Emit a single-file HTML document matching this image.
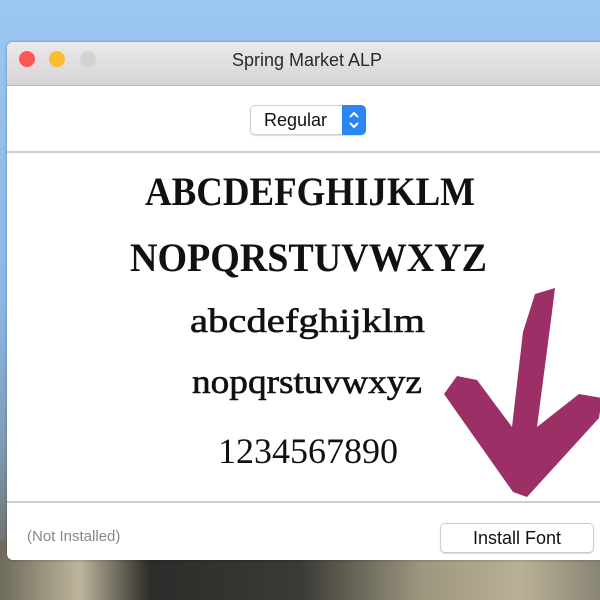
<!DOCTYPE html>
<html><head><style>
body{margin:0;width:600px;height:600px;overflow:hidden;position:relative;font-family:"Liberation Sans",sans-serif;
background:linear-gradient(#9cc6f2,#8bb8e8 300px,#7f9bb5 450px,#6d6c60 560px,#4a4a44 600px);}
.rock{position:absolute;left:0;top:540px;width:600px;height:60px;background:linear-gradient(90deg,#6e6a5c 0,#bdb59c 80px,#2c2c2a 150px,#3a3a36 300px,#9d967e 420px,#b9b196 520px,#8a8574 600px);}
.win{position:absolute;left:7px;top:42px;width:600px;height:518px;background:#fff;border-radius:6px 0 0 6px;overflow:hidden;box-shadow:0 0 3px rgba(0,0,0,.3);}
.tb{height:43px;background:linear-gradient(#ebe9eb,#d6d4d6);border-bottom:1px solid #b8b8b8;text-align:center;line-height:36px;font-size:18px;color:#2a2a2a;position:relative}
.d{position:absolute;top:9px;width:16px;height:16px;border-radius:50%}
.sel{position:absolute;left:243px;top:63px;width:116px;height:30px;border:1px solid #d0d0d0;border-radius:5px;box-sizing:border-box;font-size:18px;line-height:28px;padding-left:13px;color:#111;box-shadow:0 1px 1px rgba(0,0,0,.15)}
.sel b{position:absolute;right:-1px;top:-1px;width:24px;height:30px;background:#2a86f4;border-radius:0 5px 5px 0}
.l1{position:absolute;left:0;top:109px;width:600px;height:2px;background:#cfcfcf}
.l2{position:absolute;left:0;top:459px;width:600px;height:2px;background:#cfcfcf}
.ni{position:absolute;left:20px;top:486px;font-size:15px;color:#888}
.btn{position:absolute;left:433px;top:481px;width:154px;height:30px;border:1px solid #ccc;border-radius:5px;box-sizing:border-box;text-align:center;line-height:28px;font-size:18px;color:#111;box-shadow:0 1px 1px rgba(0,0,0,.15)}
</style></head><body>
<div class="rock"></div>
<div class="win">
<div class="tb"><span class="d" style="left:12px;background:#fc5753"></span><span class="d" style="left:42px;background:#fdbc2e"></span><span class="d" style="left:73px;background:#d3d3d3"></span>Spring Market ALP</div>
<div class="sel">Regular<b><svg width="24" height="30" viewBox="0 0 24 30"><path d="M8 12l4-4 4 4M8 18l4 4 4-4" stroke="#fff" stroke-width="2" fill="none"/></svg></b></div>
<div class="l1"></div>
<svg style="position:absolute;left:0;top:0" width="600" height="518">
<g font-family="Liberation Serif,serif" fill="#111">
<text x="138" y="163" font-size="40" font-weight="bold" textLength="330" lengthAdjust="spacingAndGlyphs">ABCDEFGHIJKLM</text>
<text x="123" y="229" font-size="40" font-weight="bold" textLength="357" lengthAdjust="spacingAndGlyphs">NOPQRSTUVWXYZ</text>
<text x="183" y="290" font-size="34" textLength="235" lengthAdjust="spacingAndGlyphs" stroke="#111" stroke-width="0.6">abcdefghijklm</text>
<text x="185" y="351" font-size="34" textLength="230" lengthAdjust="spacingAndGlyphs" stroke="#111" stroke-width="0.6">nopqrstuvwxyz</text>
<text x="211" y="421" font-size="36" textLength="180" lengthAdjust="spacingAndGlyphs">1234567890</text>
</g>
<path d="M528 252 L548 246 L545 270 L530 385 L572 352 L595 356 L592 376 L520 455 L506 450 L437 352 L450 334 L470 338 L505 385 L516 290 Z" fill="#9b2f66"/>
</svg>
<div class="l2"></div>
<div class="ni">(Not Installed)</div>
<div class="btn">Install Font</div>
</div>
</body></html>
